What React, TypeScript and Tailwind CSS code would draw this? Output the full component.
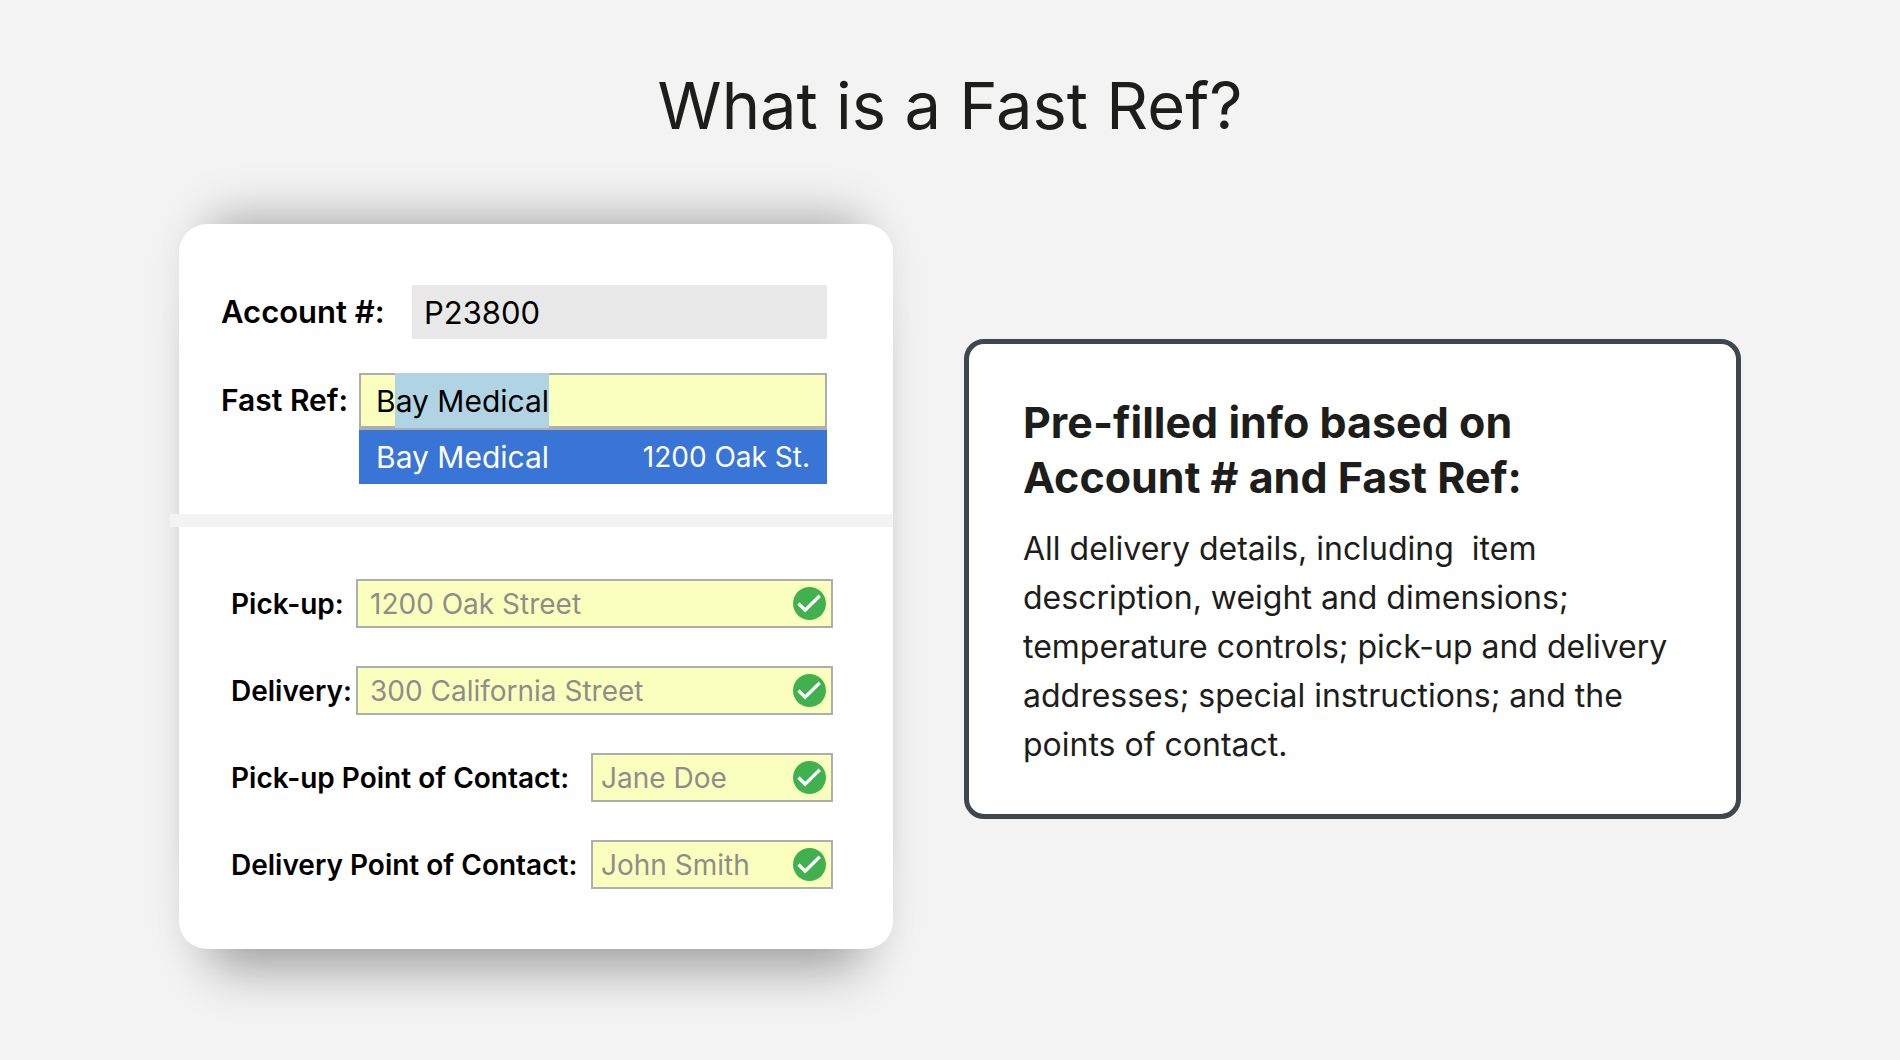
const contactFields = [
  { id: 'pickup', label: 'Pick-up:', value: '1200 Oak Street', labelWidth: 'w-[125px]', padding: 'pl-3' },
  { id: 'delivery', label: 'Delivery:', value: '300 California Street', labelWidth: 'w-[125px]', padding: 'pl-3' },
  { id: 'pickup-contact', label: 'Pick-up Point of Contact:', value: 'Jane Doe', labelWidth: 'w-[360px]', padding: 'pl-2' },
  { id: 'delivery-contact', label: 'Delivery Point of Contact:', value: 'John Smith', labelWidth: 'w-[360px]', padding: 'pl-2' },
];

function CheckBadge() {
  return (
    <svg viewBox="2 2 20 20" className="w-[33px] h-[33px] shrink-0" aria-hidden="true">
      <circle cx="12" cy="12" r="10" fill="#41b14f" />
      <path d="M9.4 17.5L4.6 12.7l1.4-1.5 3.4 3.3 8.1-8 1.4 1.5z" fill="#fff" />
    </svg>
  );
}

function FastRefForm() {
  return (
    <form className="rounded-[28px] bg-white shadow-[0_-42px_44px_-34px_rgba(0,0,0,0.26),0_54px_48px_-34px_rgba(0,0,0,0.32),0_4px_44px_0_rgba(0,0,0,0.06)] text-black">
      <div className="pt-[61px] pl-[42px] pr-[66px] pb-[30px]">
        <div className="flex items-center">
          <label htmlFor="account" className="w-[191px] shrink-0 text-[31px] font-semibold whitespace-nowrap">Account #:</label>
          <input id="account" readOnly defaultValue="P23800" className="min-w-0 flex-1 h-[54px] bg-[#e8e8e8] px-3 text-[31px] outline-none" />
        </div>

        <div className="flex items-start mt-[34px]">
          <label htmlFor="fast-ref" className="w-[138px] shrink-0 text-[30px] leading-[54px] font-semibold whitespace-nowrap">Fast Ref:</label>
          <div className="min-w-0 flex-1">
            <div className="relative bg-[#faffbd] border-2 border-b-4 border-[#aeaeae]">
              {/* autocompleted part, everything after the typed "B" */}
              <span className="absolute -top-[2px] -bottom-[2px] left-[34px] w-[154px] bg-[#b0d4e3]" />
              <input
                id="fast-ref"
                defaultValue="Bay Medical"
                autoComplete="off"
                className="relative block w-full h-[51px] bg-transparent px-[15px] text-[30px] outline-none"
              />
            </div>
            <button type="button" className="flex w-full h-[54px] items-center justify-between bg-[#3975d7] px-[17px] text-white">
              <span className="text-[30px]">Bay Medical</span>
              <span className="text-[28px]">1200 Oak St.</span>
            </button>
          </div>
        </div>
      </div>

      <div className="h-[13px] -ml-[9px] bg-[#f3f3f3]" />

      <div className="flex flex-col gap-[38px] pt-[52px] pl-[52px] pr-[60px] pb-[60px]">
        {contactFields.map((f) => (
          <div key={f.id} className="flex items-center">
            <label htmlFor={f.id} className={`${f.labelWidth} shrink-0 text-[28px] font-semibold whitespace-nowrap`}>{f.label}</label>
            <div className={`${f.padding} flex min-w-0 flex-1 h-[49px] items-center bg-[#faffbd] border-2 border-[#aeaeae] pr-[5px]`}>
              <input id={f.id} defaultValue={f.value} className="min-w-0 flex-1 bg-transparent text-[28px] text-[#918c8c] outline-none" />
              <CheckBadge />
            </div>
          </div>
        ))}
      </div>
    </form>
  );
}

export default function App() {
  return (
    <main className="min-h-screen bg-[#f3f3f3] pt-[61px] pb-20 font-['Inter',sans-serif] text-[#1d1d1b]">
      <h1 className="text-center text-[65px] leading-[90px] font-normal">What is a Fast Ref?</h1>

      <div className="mt-[73px] grid grid-cols-[minmax(0,714fr)_minmax(0,777fr)] items-start gap-[71px] pl-[179px] pr-[159px]">
        <FastRefForm />

        <section className="mt-[115px] rounded-[20px] border-[5px] border-[#40464d] bg-white px-[54px] pt-[51px] pb-[45px]">
          <h2 className="text-[43px] leading-[55px] font-bold">
            Pre-filled info based on
            <br />
            Account # and Fast Ref:
          </h2>
          <p className="mt-[19px] text-[32px] leading-[49px] font-normal whitespace-nowrap">
            All delivery details, including&nbsp; item
            <br />
            description, weight and dimensions;
            <br />
            temperature controls; pick-up and delivery
            <br />
            addresses; special instructions; and the
            <br />
            points of contact.
          </p>
        </section>
      </div>
    </main>
  );
}
